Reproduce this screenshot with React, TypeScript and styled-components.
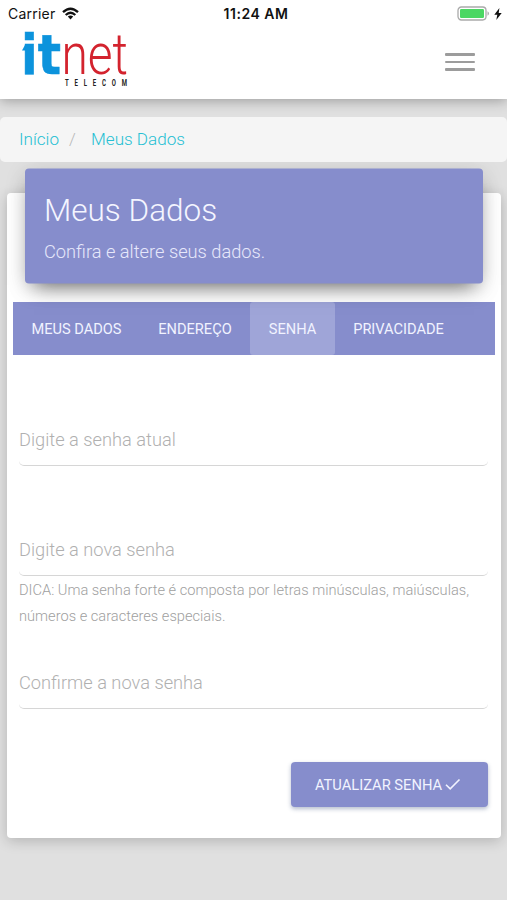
import React from "react";
import styled, { createGlobalStyle } from "styled-components";

const Global = createGlobalStyle`
  * { box-sizing: border-box; }
  body { margin: 0; background: #e0e0e0; font-family: Roboto, "Liberation Sans", sans-serif; font-weight: 300; }
  h1, p { margin: 0; }
`;

const Page = styled.div`
  height: 900px;
  overflow: hidden;
  background: #e0e0e0;
`;

const Header = styled.header`
  height: 98.5px;
  margin-bottom: 18.5px;
  background: #fff;
  box-shadow: 0 2px 12px rgba(0, 0, 0, 0.3);
`;

const StatusBar = styled.div`
  display: grid;
  grid-template-columns: 1fr auto 1fr;
  align-items: center;
  height: 27px;
  padding: 0 5px 0 8px;
  font-family: Inter, "Liberation Sans", sans-serif;
  color: #111;
`;

const Carrier = styled.div`
  display: flex;
  align-items: center;
  gap: 7px;
  font-size: 14px;
  font-weight: 400;
  letter-spacing: 0.22px;
`;

const Clock = styled.div`
  font-size: 14px;
  font-weight: 600;
  letter-spacing: 0.5px;
  padding-left: 2px;
`;

const Power = styled.div`
  display: flex;
  justify-content: flex-end;
  align-items: center;
  gap: 4px;
`;

const NavRow = styled.div`
  display: flex;
  justify-content: space-between;
  height: 71px;
  padding: 0 32px 0 20px;
`;

const LogoMark = styled.svg`
  overflow: visible;
  margin-top: 1px;
`;

const MenuButton = styled.button`
  display: flex;
  flex-direction: column;
  gap: 5px;
  align-self: flex-start;
  margin-top: 26px;
  padding: 0;
  border: 0;
  background: none;
`;

const MenuBar = styled.span`
  width: 30px;
  height: 2.5px;
  border-radius: 1px;
  background: #9c9c9c;
`;

const Breadcrumb = styled.nav`
  position: relative;
  z-index: 1;
  display: flex;
  align-items: center;
  height: 45px;
  padding: 0 19px 2px;
  border-radius: 5px;
  background: #f5f5f5;
  font-size: 17.1px;
`;

const Crumb = styled.a`
  color: #26bfd3;
`;

const Slash = styled.span`
  width: 32px;
  padding-left: 10px;
  color: #b8b8b8;
`;

const Card = styled.main`
  height: 645px;
  margin: 31px 6px 0 7px;
  padding: 0 6px;
  border-radius: 4px;
  background: #fff;
  box-shadow: 0 3px 14px rgba(0, 0, 0, 0.2);
`;

const Banner = styled.section`
  height: 115px;
  margin: 0 12px 18px;
  padding: 23.5px 19px 0;
  transform: translateY(-24.5px);
  border-radius: 4px;
  background: #868dcc;
  color: #f4f5ff;
  box-shadow: 0 10px 20px -9px rgba(0, 0, 0, 0.6), 0 4px 22px rgba(0, 0, 0, 0.12);
`;

const Title = styled.h1`
  font-size: 31.5px;
  line-height: 36px;
  font-weight: 300;
`;

const Subtitle = styled.p`
  margin-top: 11.5px;
  font-size: 18.25px;
  line-height: 24px;
  color: #e6e8fb;
`;

const Tabs = styled.div`
  display: flex;
  height: 53.5px;
  margin-top: -24.5px;
  background: #868dcc;
`;

const Tab = styled.div<{ $width: number; $active?: boolean }>`
  display: flex;
  align-items: center;
  justify-content: center;
  width: ${(p) => p.$width}px;
  padding-top: 1px;
  border-radius: 3px;
  background: ${(p) => (p.$active ? "#9fa5d8" : "transparent")};
  color: #f1f3ff;
  font-size: 14.6px;
  font-weight: 400;
`;

const Form = styled.form`
  padding: 70px 7px 0 6px;
`;

const Field = styled.div<{ $gap?: number }>`
  height: 41px;
  margin-top: ${(p) => p.$gap ?? 0}px;
  border-bottom: 1.5px solid #d6d6d6;
  border-radius: 5px;
  color: #b0b0b0;
  font-size: 18.25px;
  line-height: 30px;
`;

const Hint = styled.p`
  padding-top: 0.5px;
  margin-bottom: 0.5px;
  color: #a0a0a0;
  font-size: 14.65px;
  line-height: 26px;
  white-space: nowrap;
`;

const Submit = styled.button`
  display: flex;
  align-items: center;
  justify-content: center;
  gap: 2px;
  width: 197px;
  height: 45px;
  margin: 53.5px 0 0 auto;
  padding: 1px 3px 0 0;
  border: 0;
  border-radius: 4px;
  background: #868dcc;
  box-shadow: 0 2px 4px rgba(70, 90, 130, 0.4);
  color: #f1f3ff;
  font: 400 14.7px Roboto, sans-serif;
`;

const Logo = () => (
  <LogoMark width="112" height="62" viewBox="20 28 112 62">
    <path d="M22 50.5 25.5 44H30V50.5Z" fill="#0c93dc" />
    <text x="21" y="73.5" fontFamily="DejaVu Sans" fontWeight="700" fontSize="55" fill="#0c93dc" stroke="#0c93dc" strokeWidth="0.6" textLength="40" lengthAdjust="spacingAndGlyphs">it</text>
    <text x="61.5" y="74" fontFamily="Roboto" fontWeight="300" fontSize="58" fill="#d3232e" textLength="66.5" lengthAdjust="spacingAndGlyphs">net</text>
    <g transform="translate(65 85.5) scale(0.7 1)">
      <text fontFamily="Roboto" fontWeight="700" fontSize="8.6" fill="#222" letterSpacing="8.3">TELECOM</text>
    </g>
  </LogoMark>
);

const Wifi = () => (
  <svg width="17" height="13" viewBox="0 0 17 13" fill="none" stroke="#111" strokeWidth="2.3">
    <path d="M1 5.2Q8.5-1.8 16 5.2M3.7 8Q8.5 3.6 13.3 8" />
    <path d="M5.8 9.6Q8.5 7.3 11.2 9.6L8.5 12.4Z" fill="#111" stroke="none" />
  </svg>
);

const Battery = () => (
  <svg width="33" height="15" viewBox="0 0 33 15">
    <rect x="1" y="1" width="28" height="13" rx="3.4" fill="#fff" stroke="#aaa" strokeWidth="1.3" />
    <rect x="3" y="3" width="24" height="9" rx="1.2" fill="#4bd763" />
    <path d="M30.5 5.3Q32 6 32 7.5T30.5 9.7Z" fill="#aaa" />
  </svg>
);

const Bolt = () => (
  <svg width="8" height="12" viewBox="0 0 8 12">
    <path d="M5.4 0 .3 6.7h3L2.3 12 7.7 5h-3Z" fill="#111" />
  </svg>
);

const Check = () => (
  <svg width="17" height="17" viewBox="0 0 17 17" fill="none" stroke="#f1f3ff" strokeWidth="1.6">
    <path d="m2 7.7 4.2 4.2L15.5 2.5" />
  </svg>
);

export default function App() {
  return (
    <Page>
      <Global />
      <Header>
        <StatusBar>
          <Carrier>Carrier <Wifi /></Carrier>
          <Clock>11:24 AM</Clock>
          <Power><Battery /><Bolt /></Power>
        </StatusBar>
        <NavRow>
          <Logo />
          <MenuButton aria-label="Menu"><MenuBar /><MenuBar /><MenuBar /></MenuButton>
        </NavRow>
      </Header>
      <Breadcrumb>
        <Crumb>Início</Crumb>
        <Slash>/</Slash>
        <Crumb>Meus Dados</Crumb>
      </Breadcrumb>
      <Card>
        <Banner>
          <Title>Meus Dados</Title>
          <Subtitle>Confira e altere seus dados.</Subtitle>
        </Banner>
        <Tabs>
          <Tab $width={127}>MEUS DADOS</Tab>
          <Tab $width={110}>ENDEREÇO</Tab>
          <Tab $width={85} $active>SENHA</Tab>
          <Tab $width={127}>PRIVACIDADE</Tab>
        </Tabs>
        <Form>
          <Field>Digite a senha atual</Field>
          <Field $gap={69}>Digite a nova senha</Field>
          <Hint>DICA: Uma senha forte é composta por letras minúsculas, maiúsculas,<br />números e caracteres especiais.</Hint>
          <Field $gap={39}>Confirme a nova senha</Field>
          <Submit type="button">ATUALIZAR SENHA <Check /></Submit>
        </Form>
      </Card>
    </Page>
  );
}
